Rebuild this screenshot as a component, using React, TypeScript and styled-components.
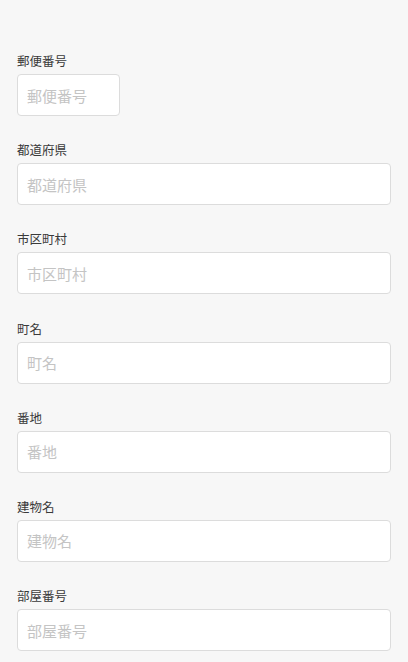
import React from "react";
import styled, { createGlobalStyle } from "styled-components";

const Global = createGlobalStyle`
  html, body { margin: 0; padding: 0; background: #f7f7f7; }
  body { font-family: "Noto Sans CJK JP", "Noto Sans", sans-serif; }
  * { box-sizing: border-box; }
`;

const Form = styled.form`
  display: flex;
  flex-direction: column;
  gap: 25.2px;
  padding: 52px 17px 12px 17px;
`;

const Field = styled.label`
  display: flex;
  flex-direction: column;
  gap: 4px;
`;

const Label = styled.span`
  font-size: 12.5px;
  line-height: 18px;
  color: #3a3a3a;
`;

const Input = styled.input<{ $narrow?: boolean }>`
  width: ${(p) => (p.$narrow ? "103px" : "100%")};
  height: 42px;
  padding: 0 9px;
  border: 1px solid #dcdcdc;
  border-radius: 4px;
  background: #fff;
  font-family: "Noto Sans CJK JP", "Noto Sans", sans-serif;
  font-size: 15px;
  color: #333;
  outline: none;
  &::placeholder { color: #c4c4c4; }
`;

const fields = [
  { name: "郵便番号", narrow: true },
  { name: "都道府県" },
  { name: "市区町村" },
  { name: "町名" },
  { name: "番地" },
  { name: "建物名" },
  { name: "部屋番号" },
];

export default function App() {
  return (
    <>
      <Global />
      <Form>
        {fields.map((f) => (
          <Field key={f.name}>
            <Label>{f.name}</Label>
            <Input $narrow={f.narrow} placeholder={f.name} />
          </Field>
        ))}
      </Form>
    </>
  );
}
